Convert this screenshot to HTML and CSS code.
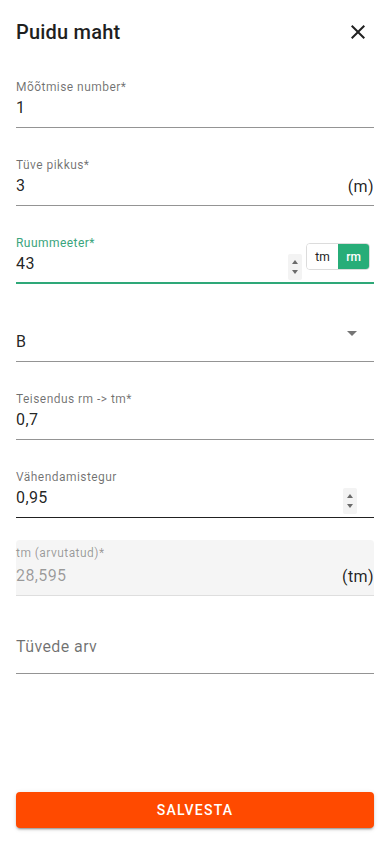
FILE: index.html
```html
<!DOCTYPE html>
<html lang="et">
<head>
  <meta charset="UTF-8">
  <meta name="viewport" content="width=device-width, initial-scale=1.0">
  <title>Puidu maht</title>
  <link rel="stylesheet" href="styles.css">
</head>
<body>
  <div class="dialog">
    <header class="dialog-header">
      <h1>Puidu maht</h1>
      <button class="close-btn" aria-label="Sulge">
        <svg viewBox="0 0 24 24" width="24" height="24"><path d="M19 6.41 17.59 5 12 10.59 6.41 5 5 6.41 10.59 12 5 17.59 6.41 19 12 13.41 17.59 19 19 17.59 13.41 12z"/></svg>
      </button>
    </header>

    <div class="form">
      <div class="field">
        <div class="field-label">Mõõtmise number*</div>
        <div class="field-row">
          <span class="field-value">1</span>
        </div>
      </div>

      <div class="field">
        <div class="field-label">Tüve pikkus*</div>
        <div class="field-row">
          <span class="field-value">3</span>
          <span class="suffix">(m)</span>
        </div>
      </div>

      <div class="field focused">
        <div class="field-label">Ruummeeter*</div>
        <div class="field-row">
          <span class="field-value">43</span>
          <span class="spinner"><i class="up"></i><i class="down"></i></span>
        </div>
        <div class="unit-toggle">
          <span class="unit">tm</span>
          <span class="unit active">rm</span>
        </div>
      </div>

      <div class="field">
        <div class="field-label"></div>
        <div class="field-row">
          <span class="field-value">B</span>
        </div>
        <span class="select-arrow"></span>
      </div>

      <div class="field">
        <div class="field-label">Teisendus rm -&gt; tm*</div>
        <div class="field-row">
          <span class="field-value">0,7</span>
        </div>
      </div>

      <div class="field hovered">
        <div class="field-label">Vähendamistegur</div>
        <div class="field-row">
          <span class="field-value">0,95</span>
          <span class="spinner spinner-end"><i class="up"></i><i class="down"></i></span>
        </div>
      </div>

      <div class="field disabled">
        <div class="field-label">tm (arvutatud)*</div>
        <div class="field-row">
          <span class="field-value">28,595</span>
          <span class="suffix">(tm)</span>
        </div>
      </div>

      <div class="field empty">
        <div class="placeholder">Tüvede arv</div>
      </div>
    </div>

    <button class="save-btn">Salvesta</button>
  </div>
</body>
</html>
```

FILE: styles.css
```css
html, body {
    height: 100%;
}

body {
    margin: 0;
    font-family: Roboto, "Liberation Sans", Arial, sans-serif;
    background: #fff;
    color: rgba(0, 0, 0, 0.87);
}

.dialog {
    display: flex;
    flex-direction: column;
    height: 100%;
    box-sizing: border-box;
    padding: 16px;
}

.dialog-header {
    display: flex;
    justify-content: space-between;
    align-items: center;
    height: 32px;
    margin-bottom: 24px;
}

.dialog-header h1 {
    margin: 0;
    font-size: 20px;
    font-weight: 500;
    letter-spacing: 0.2px;
    color: #1f1f1f;
}

.close-btn {
    border: none;
    background: none;
    padding: 0;
    margin-right: 4px;
    width: 24px;
    height: 24px;
    cursor: pointer;
}

.close-btn svg {
    fill: #212121;
    display: block;
}

.form {
    display: flex;
    flex-direction: column;
    gap: 22px;
}

.field {
    position: relative;
    height: 55px;
    border-bottom: 1px solid rgba(0, 0, 0, 0.42);
}

.field-label {
    padding-top: 7px;
    height: 16px;
    font-size: 12px;
    line-height: 16px;
    color: rgba(0, 0, 0, 0.56);
    letter-spacing: 0.45px;
}

.field-row {
    display: flex;
    align-items: center;
    height: 24px;
    margin-top: 1px;
}

.field-value {
    flex: 1;
    font-size: 16px;
    line-height: 24px;
    letter-spacing: 0.4px;
}

.suffix {
    font-size: 16px;
    letter-spacing: 0.4px;
    color: rgba(0, 0, 0, 0.87);
}

/* focused field */
.focused {
    border-bottom: 2px solid #2ea878;
    height: 54px;
}

.focused .field-label {
    color: #3aa57d;
}

.focused .field-row {
    margin-right: 72px;
}

.spinner {
    display: flex;
    flex-direction: column;
    justify-content: center;
    gap: 6px;
    width: 14px;
    height: 26px;
    margin-top: 6px;
    background: #f3f3f3;
    border-radius: 2px;
}

.spinner i {
    display: block;
    width: 0;
    height: 0;
    margin: 0 auto;
    border-left: 3.5px solid transparent;
    border-right: 3.5px solid transparent;
}

.spinner .up {
    border-bottom: 4px solid #6b6b6b;
}

.spinner .down {
    border-top: 4px solid #6b6b6b;
}

.spinner-end {
    margin-right: 17px;
}

.unit-toggle {
    position: absolute;
    right: 4px;
    top: 15px;
    display: flex;
    height: 27px;
    border: 1px solid #dcdcdc;
    border-radius: 4px;
    overflow: hidden;
    box-sizing: border-box;
}

.unit {
    display: flex;
    align-items: center;
    justify-content: center;
    width: 31px;
    font-size: 12px;
    color: #222;
    background: #fff;
}

.unit.active {
    background: #27ad78;
    color: #fff;
    font-weight: 500;
}

.select-arrow {
    position: absolute;
    right: 17px;
    top: 25px;
    width: 0;
    height: 0;
    border-left: 5px solid transparent;
    border-right: 5px solid transparent;
    border-top: 5px solid #757575;
}

.hovered {
    border-bottom-color: rgba(0, 0, 0, 0.87);
}

.disabled {
    background: #f5f5f5;
    border-radius: 4px 4px 0 0;
    border-bottom: 1px solid #dedede;
}

.disabled .field-label {
    padding-top: 5px;
    color: rgba(0, 0, 0, 0.38);
}

.disabled .field-row {
    margin-top: 3px;
}

.disabled .field-value {
    color: rgba(0, 0, 0, 0.38);
}

.placeholder {
    padding-top: 17px;
    font-size: 16px;
    line-height: 24px;
    letter-spacing: 0.4px;
    color: rgba(0, 0, 0, 0.56);
}

.save-btn {
    margin-top: auto;
    height: 36px;
    border: none;
    border-radius: 4px;
    background: #ff4a00;
    color: #fff;
    font-family: Roboto, "Liberation Sans", Arial, sans-serif;
    font-size: 14px;
    font-weight: 500;
    letter-spacing: 1.25px;
    text-transform: uppercase;
    box-shadow: 0 3px 1px -2px rgba(0, 0, 0, 0.2), 0 2px 2px 0 rgba(0, 0, 0, 0.14), 0 1px 5px 0 rgba(0, 0, 0, 0.12);
    cursor: pointer;
}
```
